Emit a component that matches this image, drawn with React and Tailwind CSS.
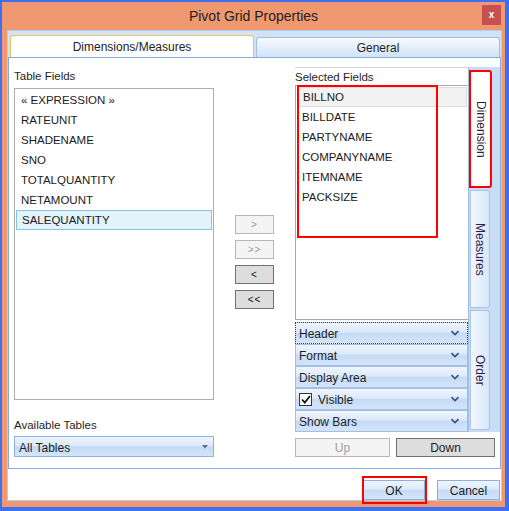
import React from 'react';

const tableFields = ['« EXPRESSION »', 'RATEUNIT', 'SHADENAME', 'SNO', 'TOTALQUANTITY', 'NETAMOUNT', 'SALEQUANTITY'];
const selectedFields = ['BILLNO', 'BILLDATE', 'PARTYNAME', 'COMPANYNAME', 'ITEMNAME', 'PACKSIZE'];

const Chevron = () => (
  <svg width="10" height="6" viewBox="0 0 10 6" className="shrink-0">
    <path d="M1.5 1.2 L5 4.6 L8.5 1.2" fill="none" stroke="#36588a" strokeWidth="1.8" />
  </svg>
);

const blueGrad =
  'bg-[linear-gradient(to_bottom,#eef5fd_0%,#dde9fa_45%,#c4daf5_52%,#d4e5f9_100%)]';

const DropRow = ({ label, focus, check }) => (
  <div
    className={`h-[22px] flex items-center pl-[3px] pr-[7px] ${blueGrad} border ${
      focus ? 'border-dotted border-[#3a3a3a]' : 'border-[#a3c0e4]'
    }`}
  >
    {check && (
      <span className="w-[13px] h-[13px] mr-[6px] bg-white border border-[#333] flex items-center justify-center">
        <svg width="10" height="9" viewBox="0 0 10 9">
          <path d="M1 4.5 L3.8 7.5 L9 1" fill="none" stroke="#111" strokeWidth="1.8" />
        </svg>
      </span>
    )}
    <span className="flex-1 pt-[2px] text-[12px] text-[#1e1e1e]">{label}</span>
    <Chevron />
  </div>
);

const SideTab = ({ label, active, h }) => (
  <div
    className={`${h} flex items-center justify-center rounded-r-[3px] ${
      active
        ? 'w-[23px] bg-white border-2 border-[#ff0000]'
        : 'w-[20px] ml-[1px] bg-[linear-gradient(to_right,#f4f8fe,#d6e6fa)] border border-[#a7c3e6]'
    }`}
  >
    <span className="[writing-mode:vertical-rl] text-[12px] text-[#2e1d48]">{label}</span>
  </div>
);

const MoveBtn = ({ label, enabled }) => (
  <div
    className={`w-[39px] h-[19px] flex items-center justify-center text-[10px] tracking-[1px] border ${
      enabled ? 'bg-[#dddddd] border-[#707070] text-[#111]' : 'bg-[#f4f4f4] border-[#b5b8ba] text-[#9a9a9a]'
    }`}
  >
    {label}
  </div>
);

export default function App() {
  return (
    <div className="w-[509px] h-[511px] bg-[#3c6ff2] pl-[2px] pt-[2px] pr-[4px] pb-[4px] font-['Liberation_Sans',Arial,sans-serif] text-[11.5px] leading-none">
      <div className="w-full h-full bg-[#f0986f] flex flex-col">
        {/* title bar */}
        <div className="h-[28px] shrink-0 relative flex items-center justify-center">
          <span className="text-[14px] text-[#222]">Pivot Grid Properties</span>
          <div className="absolute right-[4px] top-[3px] w-[19px] h-[20px] bg-[#c75050] flex items-center justify-center text-white text-[10px] font-bold">
            x
          </div>
        </div>

        {/* client area */}
        <div className="flex-1 ml-[5px] mr-[3px] mb-[7px] border border-[#b3cdee] bg-white flex flex-col">
          {/* tab headers */}
          <div className="h-[26px] shrink-0 bg-[#d3e3f6] flex items-end pl-[2px] gap-[2px]">
            <div className="w-[244px] h-[22px] bg-white border border-b-0 border-[#ebc35a] rounded-t-[3px] flex items-center justify-center text-[12px] text-[#222]">
              Dimensions/Measures
            </div>
            <div className="w-[244px] h-[20px] bg-[linear-gradient(to_bottom,#f6f9fe,#d2e3f8)] border border-b-0 border-[#a0bfe4] rounded-t-[3px] flex items-center justify-center text-[12px] text-[#222]">
              General
            </div>
          </div>

          {/* tab page */}
          <div className="h-[412px] shrink-0 border border-[#88acd9] flex pl-[5px]">
            {/* table fields */}
            <div className="w-[200px] pt-[10px] flex flex-col">
              <div className="h-[16px] pt-[2px] flex items-center text-[#1e1e1e]">Table Fields</div>
              <div className="mt-[4px] h-[312px] border border-[#abadb3] pt-[1px] px-[1px]">
                {tableFields.map((f, i) => (
                  <div
                    key={f}
                    className={`h-[20px] flex items-center pt-[2px] pl-[5px] text-[#1b1b1b] ${
                      i === tableFields.length - 1 ? 'bg-[#e3f2fb] border border-[#84c5ec] pl-[4px]' : ''
                    }`}
                  >
                    {f}
                  </div>
                ))}
              </div>
              <div className="mt-[17px] h-[16px] pt-[2px] flex items-center text-[#1e1e1e]">Available Tables</div>
              <div className={`mt-[3px] h-[21px] border border-[#90b2dc] ${blueGrad} flex items-center pl-[4px] pr-[5px]`}>
                <span className="flex-1 pt-[2px] text-[12px] text-[#1e1e1e]">All Tables</span>
                <svg width="6" height="4" viewBox="0 0 6 4">
                  <path d="M0 0 H6 L3 3.5 Z" fill="#5b6e90" />
                </svg>
              </div>
            </div>

            {/* move buttons */}
            <div className="ml-[21px] pt-[157px] flex flex-col gap-[6px]">
              <MoveBtn label=">" />
              <MoveBtn label=">>" />
              <MoveBtn label="<" enabled />
              <MoveBtn label="<<" enabled />
            </div>

            {/* selected fields */}
            <div className="ml-[21px] flex-1 pt-[9px] flex flex-col">
              <div className="h-[365px] flex">
                <div className="w-[173px] border-t border-[#d4d4d4] flex flex-col">
                  <div className="h-[17px] pt-[2px] flex items-center text-[#1e1e1e]">Selected Fields</div>
                  <div className="relative h-[235px] border border-r-0 border-[#a9a9a9] pt-[1px] px-[1px]">
                    {selectedFields.map((f, i) => (
                      <div
                        key={f}
                        className={`h-[20px] flex items-center pt-[2px] pl-[5px] text-[#1b1b1b] ${
                          i === 0 ? 'bg-[#f2f2f2] border border-[#dedede] pl-[4px]' : ''
                        }`}
                      >
                        {f}
                      </div>
                    ))}
                    <div className="absolute left-[1px] top-[-1px] w-[141px] h-[153px] border-2 border-[#ff0000]" />
                  </div>
                  <div className="mt-[2px] flex flex-col">
                    <DropRow label="Header" focus />
                    <DropRow label="Format" />
                    <DropRow label="Display Area" />
                    <DropRow label="Visible" check />
                    <DropRow label="Show Bars" />
                  </div>
                </div>
                <div className="flex-1 bg-[#c8dcf6] border-l border-[#9fbbe0] pt-[3px] flex flex-col gap-[2px]">
                  <SideTab label="Dimension" active h="h-[118px]" />
                  <SideTab label="Measures" h="h-[118px]" />
                  <SideTab label="Order" h="h-[120px]" />
                </div>
              </div>
              <div className="mt-[6px] flex gap-[6px]">
                <div className="w-[95px] h-[19px] pt-[1px] bg-[#f4f4f4] border border-[#b5b8ba] text-[#a0a0a0] flex items-center justify-center text-[12px]">
                  Up
                </div>
                <div className="w-[99px] h-[19px] pt-[1px] bg-[#dddddd] border border-[#707070] text-[#1e1e1e] flex items-center justify-center text-[12px]">
                  Down
                </div>
              </div>
            </div>
          </div>

          {/* dialog buttons */}
          <div className="flex-1 flex justify-end items-start pt-[11px] pr-[1px] gap-[12px]">
            <div className="relative">
              <div className={`w-[62px] h-[20px] pt-[1px] border border-[#8eafd8] ${blueGrad} flex items-center justify-center text-[12px] text-[#1e1e1e]`}>
                OK
              </div>
              <div className="absolute left-[-1px] top-[-4px] w-[65px] h-[28px] border-2 border-[#ff0000]" />
            </div>
            <div className={`w-[63px] h-[20px] pt-[1px] border border-[#8eafd8] ${blueGrad} flex items-center justify-center text-[12px] text-[#1e1e1e]`}>
              Cancel
            </div>
          </div>
        </div>
      </div>
    </div>
  );
}
